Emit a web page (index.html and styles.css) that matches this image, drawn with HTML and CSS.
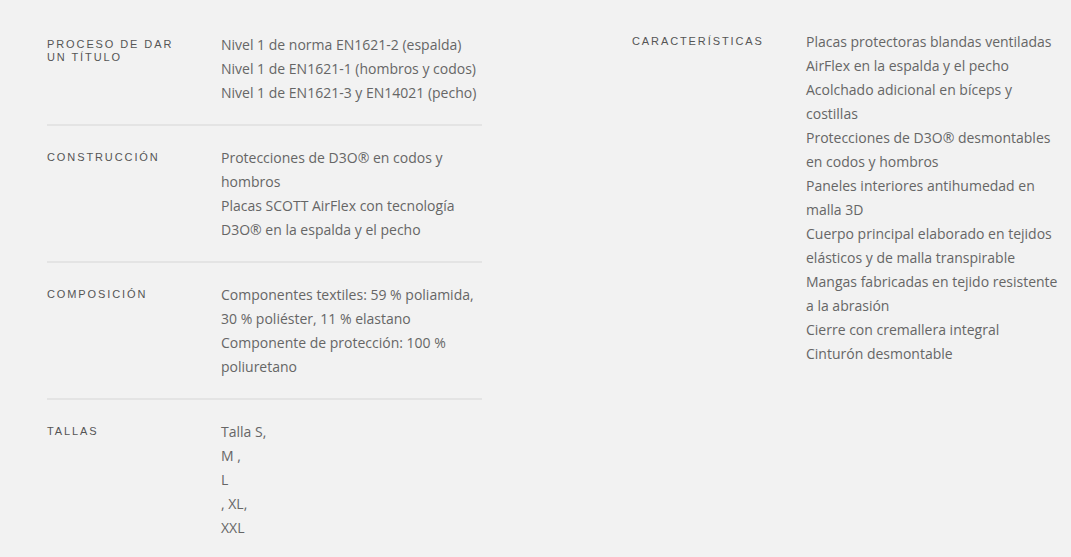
FILE: index.html
```
<!DOCTYPE html>
<html>
<head>
	<meta charset="UTF-8">
	<title>Especificaciones</title>
	<link rel="stylesheet" href="styles.css">
</head>
<body>

<div class="specs">
	<div class="col col-left">
		<div class="row">
			<h4>Proceso de dar un título</h4>
			<div class="val">
				<p>Nivel 1 de norma EN1621-2 (espalda)</p>
				<p>Nivel 1 de EN1621-1 (hombros y codos)</p>
				<p>Nivel 1 de EN1621-3 y EN14021 (pecho)</p>
			</div>
		</div>
		<div class="row">
			<h4>Construcción</h4>
			<div class="val">
				<p>Protecciones de D3O® en codos y hombros</p>
				<p>Placas SCOTT AirFlex con tecnología D3O® en la espalda y el pecho</p>
			</div>
		</div>
		<div class="row">
			<h4>Composición</h4>
			<div class="val">
				<p>Componentes textiles: 59 % poliamida, 30 % poliéster, 11 % elastano</p>
				<p>Componente de protección: 100 % poliuretano</p>
			</div>
		</div>
		<div class="row last">
			<h4>Tallas</h4>
			<div class="val">
				<p>Talla S,</p>
				<p>M ,</p>
				<p>L</p>
				<p>, XL,</p>
				<p>XXL</p>
			</div>
		</div>
	</div>

	<div class="col col-right">
		<div class="row last">
			<h4>Características</h4>
			<div class="val">
				<p>Placas protectoras blandas ventiladas AirFlex en la espalda y el pecho</p>
				<p>Acolchado adicional en bíceps y costillas</p>
				<p>Protecciones de D3O® desmontables en codos y hombros</p>
				<p>Paneles interiores antihumedad en malla 3D</p>
				<p>Cuerpo principal elaborado en tejidos elásticos y de malla transpirable</p>
				<p>Mangas fabricadas en tejido resistente a la abrasión</p>
				<p>Cierre con cremallera integral</p>
				<p>Cinturón desmontable</p>
			</div>
		</div>
	</div>
</div>

</body>
</html>
```

FILE: styles.css
```
*{ margin: 0; padding: 0; box-sizing: border-box;}
html, body{ background: #f2f2f2;}
body{ font-family: "Open Sans", "Liberation Sans", sans-serif; color: #666; font-size: 14px; line-height: 24px;}

.specs{ display: flex; gap: 150px; padding: 13px 0 0 47px;}
.col{ width: 435px;}
.col-right{ margin-top: -3px; width: 430px;}

.row{ display: grid; grid-template-columns: 140px 1fr; column-gap: 34px; padding: 20px 0 19px; border-bottom: 2px solid #e4e4e4;}
.row.last{ border-bottom: none;}

/* titulos pequeños en mayúsculas */
.row h4{ font-family: "Liberation Sans", Arial, sans-serif; font-weight: normal; font-size: 11px; line-height: 13px; letter-spacing: 1.9px; text-transform: uppercase; color: #555; padding-top: 5px;}
.val p{ margin: 0;}
```
